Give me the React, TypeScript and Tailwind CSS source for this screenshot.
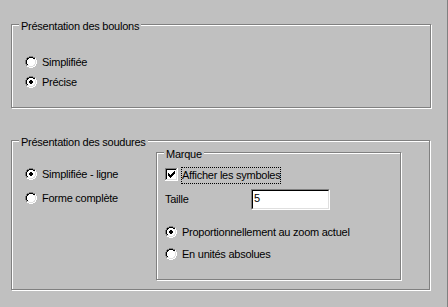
import React from 'react';

const COLORS: Record<string, string> = {
  D: '#808080',
  K: '#000000',
  W: '#ffffff',
  w: '#ffffff',
  L: '#dfdfdf',
};

const RADIO = [
  '....DDDD....',
  '..DDKKKKDD..',
  '.DKKwwwwKKW.',
  '.DKwwwwwwLW.',
  'DKwwwwwwwwLW',
  'DKwwwwwwwwLW',
  'DKwwwwwwwwLW',
  'DKwwwwwwwwLW',
  '.DKwwwwwwLW.',
  '.DLLwwwwLLW.',
  '..WWLLLLWW..',
  '....WWWW....',
];

const DOT = [
  '............',
  '............',
  '............',
  '............',
  '.....KK.....',
  '....KKKK....',
  '....KKKK....',
  '.....KK.....',
];

const CHECKBOX = [
  'DDDDDDDDDDDDW',
  'DKKKKKKKKKKLW',
  'DKwwwwwwwwwLW',
  'DKwwwwwwwKwLW',
  'DKwwwwwwKKwLW',
  'DKwKwwwKKKwLW',
  'DKwKKwKKKwwLW',
  'DKwKKKKKwwwLW',
  'DKwwKKKwwwwLW',
  'DKwwwKwwwwwLW',
  'DKwwwwwwwwwLW',
  'DLLLLLLLLLLLW',
  'WWWWWWWWWWWWW',
];

// little pixel-art helper for the classic 3D controls
const Pixels: React.FC<{ rows: string[][]; size: number }> = ({ rows, size }) => (
  <svg width={size} height={size} viewBox={`0 0 ${size} ${size}`} shapeRendering="crispEdges" className="block shrink-0">
    {rows.map((layer, li) =>
      layer.map((row, y) =>
        row.split('').map((ch, x) =>
          ch === '.' ? null : <rect key={`${li}-${x}-${y}`} x={x} y={y} width={1} height={1} fill={COLORS[ch]} />
        )
      )
    )}
  </svg>
);

const Radio: React.FC<{ label: string; checked?: boolean; rowClass: string }> = ({ label, checked, rowClass }) => (
  <div className={`flex items-center ${rowClass}`}>
    <div className="w-[13px] flex">
      <Pixels rows={checked ? [RADIO, DOT] : [RADIO]} size={12} />
    </div>
    <span className="ml-[4px] whitespace-nowrap">{label}</span>
  </div>
);

const GroupBox: React.FC<{ title: string; className: string; children: React.ReactNode }> = ({ title, className, children }) => (
  <div className={`relative border border-[#808080] shadow-[inset_1px_1px_0_#fff,1px_1px_0_#fff] ${className}`}>
    <span className="absolute top-[-5px] left-[7px] bg-[#c0c0c0] px-[2px] whitespace-nowrap">{title}</span>
    {children}
  </div>
);

export default function App() {
  return (
    <div className="w-[448px] h-[307px] overflow-hidden bg-[#c0c0c0] border-r border-[#808080] pt-[24px] pl-[11px] text-black text-[11px] leading-[13px] tracking-[-0.25px] font-['Liberation_Sans',Arial,sans-serif]">
      {/* Boulons */}
      <GroupBox title="Présentation des boulons" className="w-[420px] h-[84px] pl-[13px] pt-[27px]">
        <Radio label="Simplifiée" rowClass="h-[20px]" />
        <Radio label="Précise" checked rowClass="h-[20px]" />
      </GroupBox>

      {/* Soudures */}
      <GroupBox title="Présentation des soudures" className="mt-[32px] w-[419px] h-[150px] pl-[13px] pt-[11px] flex items-start">
        <div className="w-[131px] pt-[10px]">
          <Radio label="Simplifiée - ligne" checked rowClass="h-[24px]" />
          <Radio label="Forme complète" rowClass="h-[24px]" />
        </div>

        <GroupBox title="Marque" className="w-[245px] h-[128px] pl-[8px] pt-[14px]">
          <div className="flex items-start h-[17px]">
            <div className="mt-[1px]">
              <Pixels rows={[CHECKBOX]} size={13} />
            </div>
            <span className="ml-[3px] h-[17px] border border-dotted border-black leading-[15px] whitespace-nowrap">
              Afficher les symboles
            </span>
          </div>

          <div className="mt-[5px] flex items-center h-[21px]">
            <span className="w-[86px]">Taille</span>
            <div className="w-[79px] h-[21px] border border-t-[#808080] border-l-[#808080] border-b-white border-r-white">
              <div className="h-full border border-t-black border-l-black border-b-[#dfdfdf] border-r-[#dfdfdf] bg-white pl-[1px] pt-[1px]">
                5
              </div>
            </div>
          </div>

          <div className="mt-[11px]">
            <Radio label="Proportionnellement au zoom actuel" checked rowClass="h-[22px]" />
            <Radio label="En unités absolues" rowClass="h-[22px]" />
          </div>
        </GroupBox>
      </GroupBox>
    </div>
  );
}
